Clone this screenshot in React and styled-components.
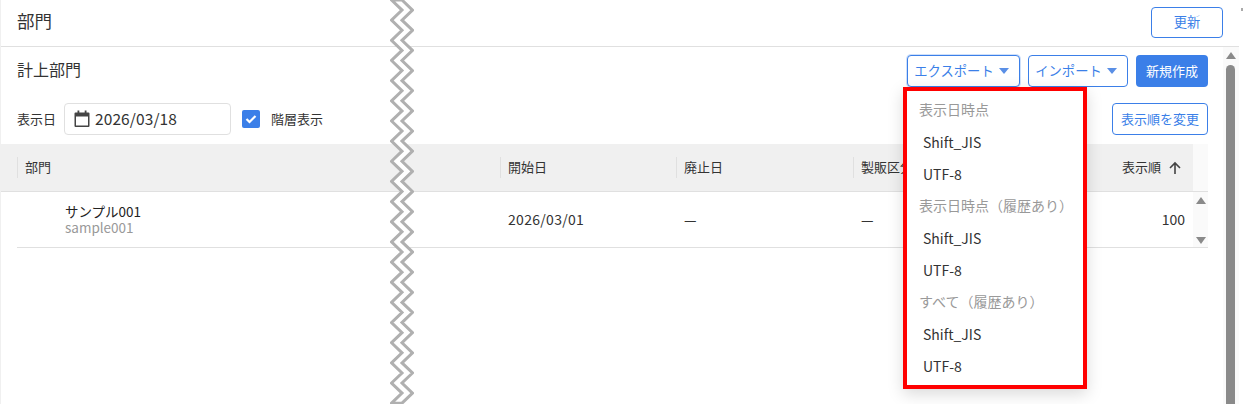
import React from "react";
import styled, { createGlobalStyle } from "styled-components";

const FONT = `"Noto Sans CJK JP", "Noto Sans", sans-serif`;
const BLUE = "#3b7fe8";

const menuGroups = [
  { label: "表示日時点", items: ["Shift_JIS", "UTF-8"] },
  { label: "表示日時点（履歴あり）", items: ["Shift_JIS", "UTF-8"] },
  { label: "すべて（履歴あり）", items: ["Shift_JIS", "UTF-8"] },
];

const columns = [
  { label: "部門", width: "483px" },
  { label: "開始日", width: "176px" },
  { label: "廃止日", width: "177px" },
  { label: "製販区分", width: "247px" },
];

// zigzag "cut" mark that splits the screenshot
const STEP = 10.08;
const zigzagPoints = (offset) => {
  const points = [];
  for (let i = 0; i <= 40; i++) {
    const x = offset + (i % 2 === 0 ? 0 : 10.5);
    points.push([x, i * STEP]);
  }
  return points;
};
const toLine = (pts) => pts.map((p) => p.join(",")).join(" ");

const cutOutline = toLine([...zigzagPoints(1.5), ...zigzagPoints(12).reverse()]);

const App = () => {
  return (
    <>
      <GlobalStyle />
      <Page>
        <Main>
          <Header>
            <Title>部門</Title>
            <OutlineButton $width="72px" $height="31px">更新</OutlineButton>
          </Header>
          <Body>
            <Content>
              <Toolbar>
                <SubTitle>計上部門</SubTitle>
                <Actions>
                  <OutlineButton $width="113px" $focus $caret>
                    エクスポート
                    <Caret />
                  </OutlineButton>
                  <OutlineButton $width="100px" $caret>
                    インポート
                    <Caret />
                  </OutlineButton>
                  <PrimaryButton>新規作成</PrimaryButton>
                </Actions>
              </Toolbar>
              <FilterRow>
                <FilterLabel>表示日</FilterLabel>
                <DateInput>
                  <svg width="16" height="18" viewBox="0 0 16 18">
                    <path
                      d="M1.5 2.5h13a1 1 0 0 1 1 1v12.5a1 1 0 0 1-1 1h-13a1 1 0 0 1-1-1V3.500a1 1 0 0 1 1-1zM2 6.500V15.500h12V6.500z"
                      fill="#444"
                      fillRule="evenodd"
                    />
                    <rect x="3.500" y="0.500" width="1.800" height="3" fill="#444" />
                    <rect x="10.700" y="0.500" width="1.800" height="3" fill="#444" />
                  </svg>
                  2026/03/18
                </DateInput>
                <CheckBox>
                  <svg width="12" height="10" viewBox="0 0 12 10">
                    <path d="M1.500 5l3 3 6-6" fill="none" stroke="#fff" strokeWidth="2.200" />
                  </svg>
                </CheckBox>
                <CheckLabel>階層表示</CheckLabel>
                <OrderButton $width="96px">表示順を変更</OrderButton>
              </FilterRow>
              <Table>
                <HeadRow>
                  <HeadCells>
                    {columns.map((c) => (
                      <HeadCell key={c.label} $width={c.width}>{c.label}</HeadCell>
                    ))}
                    <SortCell>
                      <SortLabel>表示順</SortLabel>
                      <svg width="14" height="14" viewBox="0 0 14 14">
                        <path d="M7 13V2M2 7l5-5 5 5" fill="none" stroke="#444" strokeWidth="1.600" />
                      </svg>
                    </SortCell>
                  </HeadCells>
                  <HeadGutter />
                </HeadRow>
                <BodyRow>
                  <BodyCells>
                    <NameCell $width="483px">
                      <Name>サンプル001</Name>
                      <Code>sample001</Code>
                    </NameCell>
                    <BodyCell $width="176px">2026/03/01</BodyCell>
                    <BodyCell $width="177px">—</BodyCell>
                    <BodyCell $width="247px">—</BodyCell>
                    <OrderCell>100</OrderCell>
                  </BodyCells>
                  <RowScroll>
                    <ArrowUp />
                    <ArrowDown />
                  </RowScroll>
                </BodyRow>
              </Table>
            </Content>
            <ScrollTrack>
              <ArrowUp />
              <Thumb />
            </ScrollTrack>
          </Body>
        </Main>

        <EdgeMark />

        <Cut width="24" height="404" viewBox="0 0 24 404">
          <polygon points={cutOutline} fill="#fff" stroke="#b0b0b0" strokeWidth="3" />
        </Cut>

        <Menu>
          {menuGroups.map((g) => (
            <React.Fragment key={g.label}>
              <MenuLabel>{g.label}</MenuLabel>
              {g.items.map((item) => (
                <MenuItem key={item}>{item}</MenuItem>
              ))}
            </React.Fragment>
          ))}
        </Menu>
      </Page>
    </>
  );
};

const GlobalStyle = createGlobalStyle`
  html, body {
    margin: 0;
    padding: 0;
    background: #fff;
    overflow: hidden;
  }
  * {
    box-sizing: border-box;
  }
`;

const Page = styled.div`
  width: 1243px;
  height: 404px;
  position: relative;
  overflow: hidden;
  font-family: ${FONT};
  font-size: 13px;
  color: #333;
  background: #fff;
`;

const Main = styled.div`
  width: 1239px;
  height: 404px;
  display: flex;
  flex-direction: column;
  border-left: 1px solid #f0f0f0;
`;

const Header = styled.div`
  height: 47px;
  flex: none;
  display: flex;
  align-items: center;
  justify-content: space-between;
  padding: 0 16px 2px 16px;
  border-bottom: 1px solid #e0e0e0;
`;

const Title = styled.div`
  font-size: 17.5px;
  margin-top: -4px;
`;

const Body = styled.div`
  flex: 1;
  display: flex;
`;

const Content = styled.div`
  width: 1222px;
  flex: none;
  padding-right: 15px;
`;

const Toolbar = styled.div`
  height: 48px;
  padding: 8px 0 0 16px;
  display: flex;
  justify-content: space-between;
  align-items: flex-start;
`;

const SubTitle = styled.div`
  font-size: 16px;
  line-height: 29px;
`;

const Actions = styled.div`
  display: flex;
  gap: 8px;
`;

const OutlineButton = styled.div`
  width: ${(p) => p.$width};
  height: ${(p) => p.$height || "32px"};
  display: flex;
  align-items: center;
  justify-content: center;
  gap: 5px;
  padding: 0 ${(p) => (p.$caret ? "4px" : "0")} 2px 0;
  font-size: 13.3px;
  color: ${BLUE};
  background: #fff;
  border: 1px solid ${BLUE};
  border-radius: 4px;
  box-shadow: ${(p) => (p.$focus ? "0 0 0 1px #cfe0fa" : "none")};
`;

const PrimaryButton = styled.div`
  width: 72px;
  height: 32px;
  display: flex;
  align-items: center;
  justify-content: center;
  padding-bottom: 2px;
  font-size: 13px;
  color: #fff;
  background: ${BLUE};
  border-radius: 4px;
`;

const Caret = styled.span`
  width: 0;
  height: 0;
  margin-top: 2px;
  border-left: 5px solid transparent;
  border-right: 5px solid transparent;
  border-top: 6px solid #5a8fe6;
`;

const FilterRow = styled.div`
  height: 49px;
  padding: 8px 0 0 16px;
  display: flex;
  align-items: flex-start;
`;

const FilterLabel = styled.div`
  line-height: 32px;
  width: 47px;
`;

const DateInput = styled.div`
  width: 167px;
  height: 32px;
  display: flex;
  align-items: center;
  gap: 5px;
  padding-left: 9px;
  font-size: 15.5px;
  letter-spacing: 0.1px;
  line-height: 1;
  border: 1px solid #e0e0e0;
  border-radius: 4px;
`;

const CheckBox = styled.div`
  width: 18px;
  height: 18px;
  margin: 7px 11px 0 11px;
  display: flex;
  align-items: center;
  justify-content: center;
  background: ${BLUE};
  border-radius: 2px;
`;

const CheckLabel = styled.div`
  line-height: 32px;
`;

const OrderButton = styled(OutlineButton)`
  margin-left: auto;
  font-size: 13px;
`;

const Table = styled.div`
  width: 1207px;
`;

const HeadRow = styled.div`
  display: flex;
  height: 48px;
  border-bottom: 1px solid #e0e0e0;
`;

const HeadCells = styled.div`
  width: 1192px;
  padding-left: 16px;
  display: flex;
  align-items: center;
  background: #f0f0f0;
`;

const HeadGutter = styled.div`
  flex: 1;
  background: #fafafa;
`;

const HeadCell = styled.div`
  width: ${(p) => p.$width};
  flex: none;
  height: 21px;
  padding-left: 7px;
  line-height: 19px;
  border-left: 1px solid #e0e0e0;
  white-space: nowrap;
  overflow: hidden;
`;

const SortCell = styled.div`
  flex: 1;
  display: flex;
  align-items: center;
  justify-content: flex-end;
  gap: 7px;
  padding-right: 11px;
  white-space: nowrap;
`;

const SortLabel = styled.span`
  margin-top: -2px;
`;

const BodyRow = styled.div`
  display: flex;
  height: 56px;
  margin-left: 16px;
  border-bottom: 1px solid #e0e0e0;
`;

const BodyCells = styled.div`
  width: 1176px;
  display: flex;
  align-items: center;
  padding-bottom: 2px;
`;

const BodyCell = styled.div`
  width: ${(p) => p.$width};
  flex: none;
  padding-left: 8px;
  font-size: 14px;
  letter-spacing: 0.3px;
`;

const NameCell = styled(BodyCell)`
  padding: 1px 0 0 48px;
  line-height: 16px;
  letter-spacing: 0;
`;

const Name = styled.div`
  font-size: 13.5px;
  color: #222;
`;

const Code = styled.div`
  font-size: 13.5px;
  color: #999;
`;

const OrderCell = styled.div`
  flex: 1;
  text-align: right;
  padding-right: 8px;
  font-size: 14px;
`;

const RowScroll = styled.div`
  flex: 1;
  display: flex;
  flex-direction: column;
  align-items: center;
  justify-content: space-between;
  padding: 5px 0 3px;
  background: #fafafa;
`;

const ArrowUp = styled.span`
  width: 0;
  height: 0;
  border-left: 5px solid transparent;
  border-right: 5px solid transparent;
  border-bottom: 7px solid #8a8a8a;
`;

const ArrowDown = styled.span`
  width: 0;
  height: 0;
  border-left: 5px solid transparent;
  border-right: 5px solid transparent;
  border-top: 7px solid #8a8a8a;
`;

const ScrollTrack = styled.div`
  flex: 1;
  padding: 5px 1px 0 0;
  display: flex;
  flex-direction: column;
  align-items: center;
  gap: 6px;
  background: #fafafa;
`;

const Thumb = styled.div`
  width: 9px;
  flex: 1;
  background: #8a8a8a;
  border-radius: 5px 5px 0 0;
`;

const EdgeMark = styled.div`
  position: absolute;
  left: 1241px;
  top: 8px;
  width: 2px;
  height: 3px;
  background: #aaa;
`;

const Cut = styled.svg`
  position: absolute;
  left: 390px;
  top: 0;
`;

const Menu = styled.div`
  position: absolute;
  left: 903px;
  top: 87px;
  width: 184px;
  height: 302px;
  padding-top: 3px;
  background: #fff;
  border: 4px solid #f00;
  box-shadow: 0 5px 15px rgba(0, 0, 0, 0.15);
`;

const MenuLabel = styled.div`
  height: 32px;
  line-height: 30px;
  padding-left: 12px;
  font-size: 14px;
  color: #999;
  white-space: nowrap;
`;

const MenuItem = styled.div`
  height: 32px;
  line-height: 32px;
  padding-left: 16px;
  font-size: 14px;
  color: #333;
`;

export default App;
